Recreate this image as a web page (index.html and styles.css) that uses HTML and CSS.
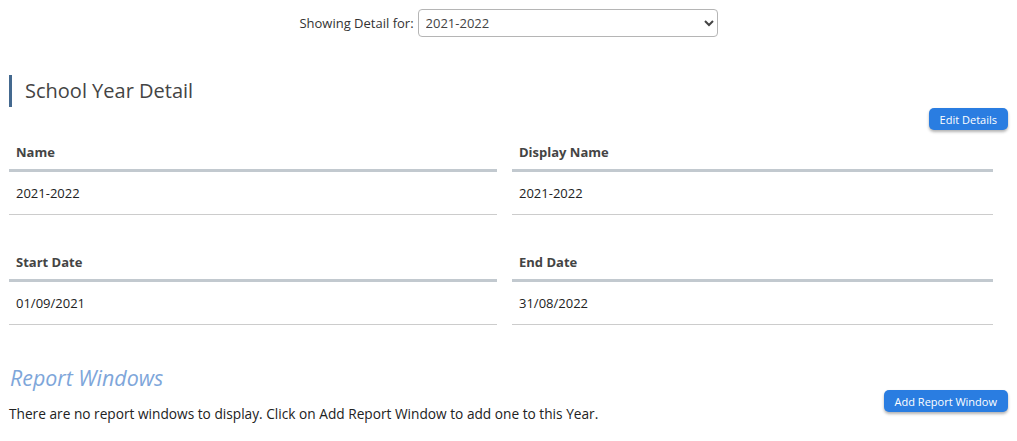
FILE: index.html
```html
<!DOCTYPE html>
<html lang="en">
<head>
  <meta charset="UTF-8">
  <title>School Year Detail</title>
  <link rel="stylesheet" href="styles.css">
</head>
<body>
  <div class="picker">
    <label for="year">Showing Detail for:</label>
    <select id="year">
      <option>2021-2022</option>
    </select>
  </div>

  <h2 class="section-title">School Year Detail</h2>
  <div class="actions"><button class="btn">Edit Details</button></div>

  <div class="detail-grid">
    <div class="field">
      <div class="field-head">Name</div>
      <div class="field-value">2021-2022</div>
    </div>
    <div class="field">
      <div class="field-head">Display Name</div>
      <div class="field-value">2021-2022</div>
    </div>
    <div class="field">
      <div class="field-head">Start Date</div>
      <div class="field-value">01/09/2021</div>
    </div>
    <div class="field">
      <div class="field-head">End Date</div>
      <div class="field-value">31/08/2022</div>
    </div>
  </div>

  <h3 class="sub-title">Report Windows</h3>
  <div class="report-row">
    <p class="empty">There are no report windows to display. Click on Add Report Window to add one to this Year.</p>
    <button class="btn">Add Report Window</button>
  </div>
</body>
</html>
```

FILE: styles.css
```css
body{
  margin: 0; padding: 0 9px;
  font-family: "Open Sans", "Liberation Sans", sans-serif;
  font-size: 13px; color: #222;
  background: #fff;
}
.picker{
  display: flex; justify-content: center; align-items: center; gap: 4px;
  padding-top: 9px; height: 28px;
}
.picker label{
  font-size: 13px; color: #333;
}
.picker select{
  width: 300px; height: 28px; padding: 0 3px;
  font-family: inherit; font-size: 13px; color: #444;
  border: 1px solid #b5b5b5; border-radius: 4px; background: #fff;
}
.section-title{
  margin: 38px 0 0; padding-left: 13px; height: 32px; line-height: 32px;
  border-left: 3px solid #44698f;
  font-size: 20px; font-weight: normal; color: #444;
}
.actions{
  display: flex; justify-content: flex-end; height: 22px; margin-top: 1px;
}
.btn{
  height: 22px; padding: 0 11px;
  font-family: inherit; font-size: 11px; color: #fff;
  background: #2a7de1; border: none; border-radius: 5px;
  box-shadow: 0 2px 3px rgba(0,0,0,0.3);
}
.detail-grid{
  display: grid; grid-template-columns: 488px 481px; column-gap: 15px; row-gap: 30px;
  margin-top: 5px;
}
.field-head{
  height: 37px; padding: 7px 0 0 7px; line-height: 20px;
  font-weight: bold; color: #444;
  border-bottom: 3px solid #c2c9cf; box-sizing: border-box;
}
.field-value{
  height: 43px; line-height: 42px; padding-left: 7px;
  border-bottom: 1px solid #ccc; box-sizing: border-box;
}
.sub-title{
  margin: 39px 0 0 1px; height: 28px; line-height: 28px;
  font-size: 21.4px; font-weight: normal; font-style: italic; color: #7ea6da;
}
.report-row{
  display: flex; justify-content: space-between; align-items: flex-start;
}
.empty{
  margin: 12px 0 0; font-size: 13.7px;
}
.report-row .btn{
  margin-top: -2px;
}
```
